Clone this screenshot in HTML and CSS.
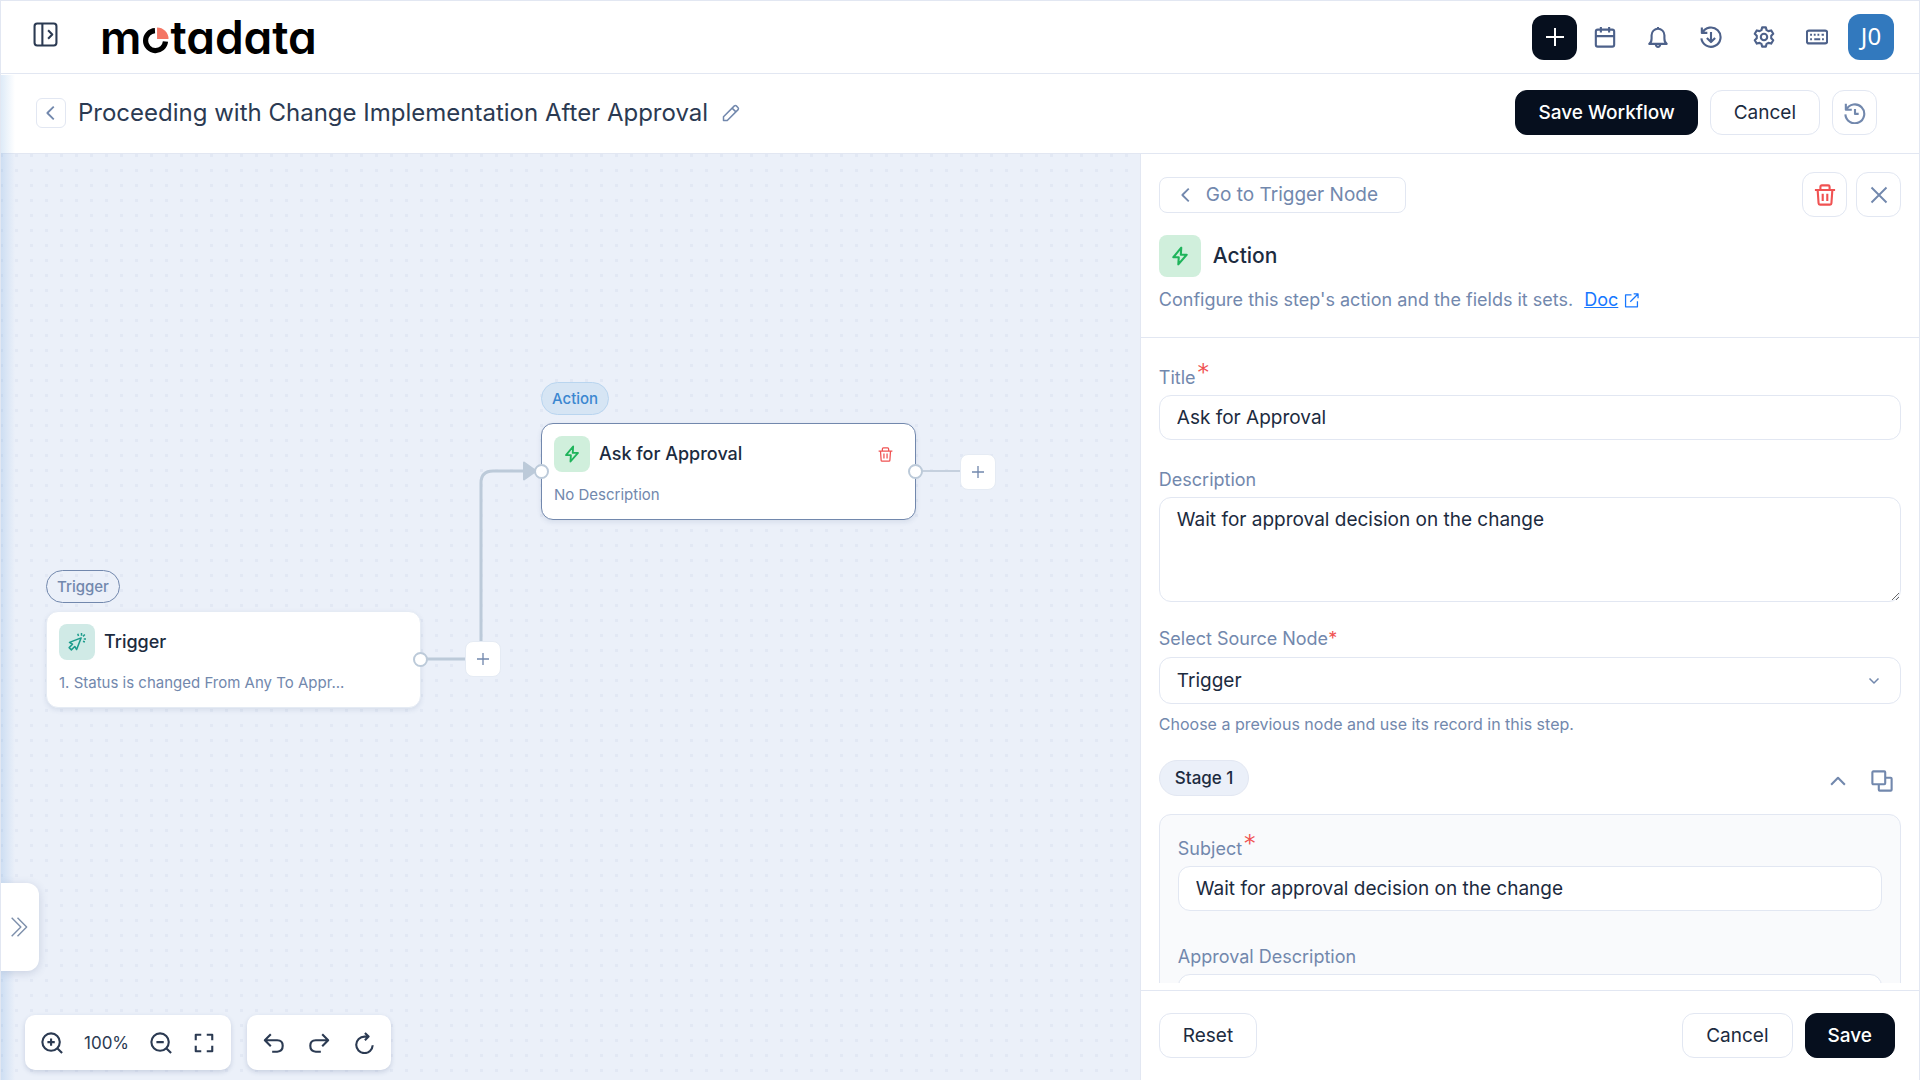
FILE: index.html
```html
<!DOCTYPE html>
<html lang="en">
<head>
    <meta charset="UTF-8">
    <meta name="viewport" content="width=device-width, initial-scale=1.0">
    <title>Workflow - Proceeding with Change Implementation After Approval</title>
    <link rel="stylesheet" href="styles.css">
</head>
<body>
    <!-- Shared icons -->
    <svg class="sprite" aria-hidden="true">
        <symbol id="i-left" viewBox="0 0 24 24"><path d="M15 5l-7 7 7 7"/></symbol>
        <symbol id="i-plus" viewBox="0 0 24 24"><path d="M12 3v18M3 12h18"/></symbol>
        <symbol id="i-bolt" viewBox="0 0 24 24"><path d="M13.500 2L4 13.500h6.500l-.500 8.500L20 10.500h-7z"/></symbol>
        <symbol id="i-trash" viewBox="0 0 24 24"><path d="M1 6.500h22M7 6V3q0-1.500 1.500-1.500h7Q17 1.500 17 3v3M4 7l1 14q0 1.500 1.500 1.500h11q1.500 0 1.500-1.500L20 7M9.500 10.500v8M14.500 10.500v8"/></symbol>
        <symbol id="i-history" viewBox="0 0 24 24"><path d="M2 2v6.500h6.500M2.500 8.500a10.300 10.300 0 1 1-1 5M12 7.500V13h4"/></symbol>
    </svg>

    <div class="app">
        <header class="topbar">
            <button class="icon-btn menu-btn" type="button" aria-label="Expand menu">
                <svg viewBox="0 0 24 24"><rect x="1.500" y="1.500" width="21" height="21" rx="2.500"/><path d="M9 1.500v21M14.500 8l4 4-4 4"/></svg>
            </button>
            <a class="logo" href="#" aria-label="motadata">
                <span>m</span><svg viewBox="0 0 26 26"><path class="logo-ring" d="M12.500 3.500A9.600 9.600 0 1 0 22.600 14"/><path class="logo-wedge" d="M14.500 0.500A11 11 0 0 1 25.500 11.500H14.500z"/></svg><span>tadata</span>
            </a>
            <nav class="top-actions">
                <button class="add-btn" type="button" aria-label="Create"><svg viewBox="0 0 24 24"><use href="#i-plus"/></svg></button>
                <button class="icon-btn" type="button" aria-label="Calendar">
                    <svg viewBox="0 0 24 24"><rect x="2" y="4" width="20" height="18.500" rx="2"/><path d="M2 11h20M7.500 1v6M16.500 1v6"/></svg>
                </button>
                <button class="icon-btn" type="button" aria-label="Notifications">
                    <svg viewBox="0 0 24 24"><path d="M2.500 19.500c2-1.500 2.500-3 2.500-6V10a7 7 0 0 1 14 0v3.500c0 3 .500 4.500 2.500 6zM9.500 20q.500 2.800 2.500 2.800t2.500-2.800M12 1v2"/></svg>
                </button>
                <button class="icon-btn" type="button" aria-label="Updates">
                    <svg viewBox="0 0 24 24"><path d="M2 1.500v6h6M2.500 7.500a10.500 10.500 0 1 1-1 6M12 6.500v11M7.500 13l4.500 4.500 4.500-4.500"/></svg>
                </button>
                <button class="icon-btn" type="button" aria-label="Settings">
                    <svg viewBox="0 0 24 24"><circle cx="12" cy="12" r="3.500"/><path d="M10 1.500h4l.800 3 2 1.100 3-.800 2.300 3.600-2.200 2.200v2.800l2.200 2.200-2.300 3.600-3-.800-2 1.100-.800 3h-4l-.800-3-2-1.100-3 .800-2.300-3.600 2.200-2.200v-2.800L1.900 8.400l2.300-3.600 3 .800 2-1.100z"/></svg>
                </button>
                <button class="icon-btn" type="button" aria-label="Keyboard shortcuts">
                    <svg viewBox="0 0 24 24"><rect x="1" y="5" width="22" height="14" rx="2"/><path d="M4.500 9.500h2M8.500 9.500h2M12.500 9.500h2M17 9.500h2.500M4.500 14.500h2M9 14.500h6.500M17.500 14.500h2"/></svg>
                </button>
                <button class="avatar" type="button">J0</button>
            </nav>
        </header>

        <main class="page">
            <div class="page-head">
                <button class="back-btn" type="button" aria-label="Back"><svg viewBox="0 0 24 24"><use href="#i-left"/></svg></button>
                <h1>Proceeding with Change Implementation After Approval</h1>
                <button class="edit-btn" type="button" aria-label="Rename">
                    <svg viewBox="0 0 24 24"><path d="M2 22v-5L16.500 2.500q1.300-1 2.600 0l2.400 2.400q1 1.300 0 2.600L7 22zM13.500 5.500l5 5"/></svg>
                </button>
                <div class="head-actions">
                    <button class="btn btn-dark" type="button">Save Workflow</button>
                    <button class="btn" type="button">Cancel</button>
                    <button class="square-btn" type="button" aria-label="History"><svg viewBox="0 0 24 24"><use href="#i-history"/></svg></button>
                </div>
            </div>

            <div class="workspace">
                <section class="canvas">
                    <svg class="edges" aria-hidden="true">
                        <path class="edge" d="M420 505H470M480 505V329Q480 317 492 317H526"/>
                        <path class="edge-thin" d="M915 317H960"/>
                        <path class="arrow" d="M523 308.500L535 317l-12 8.500z"/>
                    </svg>

                    <div class="node-group action-node">
                        <span class="tag tag-action">Action</span>
                        <article class="node selected">
                            <div class="node-head">
                                <span class="node-icon green"><svg viewBox="0 0 24 24"><use href="#i-bolt"/></svg></span>
                                <h2>Ask for Approval</h2>
                                <button class="node-delete" type="button" aria-label="Delete node"><svg viewBox="0 0 24 24"><use href="#i-trash"/></svg></button>
                            </div>
                            <p>No Description</p>
                            <i class="port port-in"></i>
                            <i class="port port-out"></i>
                        </article>
                    </div>

                    <div class="node-group trigger-node">
                        <span class="tag">Trigger</span>
                        <article class="node">
                            <div class="node-head">
                                <span class="node-icon teal">
                                    <svg viewBox="0 0 24 24"><path d="M17.500 6.500L2 12.500l4 2.500-4.500 4.500 3 3L9 18l2.500 4zM13 1l1 3M18 0v3.500M22.500 2L20 4.500M21 8h3M20 11l2.500 1"/></svg>
                                </span>
                                <h2>Trigger</h2>
                            </div>
                            <p>1. Status is changed From Any To Appr...</p>
                            <i class="port port-out"></i>
                        </article>
                    </div>

                    <button class="add-node add-trigger" type="button" aria-label="Add node after Trigger"><svg viewBox="0 0 24 24"><use href="#i-plus"/></svg></button>
                    <button class="add-node add-action" type="button" aria-label="Add node after Ask for Approval"><svg viewBox="0 0 24 24"><use href="#i-plus"/></svg></button>

                    <button class="drawer-btn" type="button" aria-label="Open drawer">
                        <svg viewBox="0 0 24 24"><path d="M2 1l11 11L2 23M9 1l11 11L9 23"/></svg>
                    </button>

                    <div class="canvas-tools">
                        <div class="tool-group zoom-tools">
                            <button type="button" aria-label="Zoom in"><svg viewBox="0 0 24 24"><circle cx="11" cy="11" r="9.500"/><path d="M18 18l5 5M11 7v8M7 11h8"/></svg></button>
                            <span>100%</span>
                            <button type="button" aria-label="Zoom out"><svg viewBox="0 0 24 24"><circle cx="11" cy="11" r="9.500"/><path d="M18 18l5 5M7 11h8"/></svg></button>
                            <button type="button" aria-label="Fit to screen"><svg viewBox="0 0 24 24"><path d="M3 9V3h6M15 3h6v6M21 15v6h-6M9 21H3v-6"/></svg></button>
                        </div>
                        <div class="tool-group edit-tools">
                            <button type="button" aria-label="Undo"><svg viewBox="0 0 24 24"><path d="M8.500 2.500L2 9l6.500 6.500M2 9h13.500q6 0 6 6t-6 6.500H10"/></svg></button>
                            <button type="button" aria-label="Redo"><svg viewBox="0 0 24 24"><path d="M15.500 2.500L22 9l-6.500 6.500M22 9H8.500q-6 0-6 6t6 6.500H14"/></svg></button>
                            <button type="button" aria-label="Refresh"><svg viewBox="0 0 24 24"><path d="M13 1l4 4-4 4M17 5h-4.500a9 9 0 1 0 9 9.500"/></svg></button>
                        </div>
                    </div>
                </section>

                <aside class="panel">
                    <div class="panel-head">
                        <div class="panel-nav">
                            <button class="goto-btn" type="button"><svg viewBox="0 0 24 24"><use href="#i-left"/></svg>Go to Trigger Node</button>
                            <button class="square-btn danger" type="button" aria-label="Delete"><svg viewBox="0 0 24 24"><use href="#i-trash"/></svg></button>
                            <button class="square-btn close" type="button" aria-label="Close"><svg viewBox="0 0 24 24"><path d="M3 3l18 18M21 3L3 21"/></svg></button>
                        </div>
                        <div class="panel-title">
                            <span class="panel-icon green"><svg viewBox="0 0 24 24"><use href="#i-bolt"/></svg></span>
                            <h2>Action</h2>
                        </div>
                        <p class="panel-info">
                            Configure this step's action and the fields it sets.
                            <a href="#">Doc</a>
                            <svg viewBox="0 0 24 24"><path d="M12 3H2.500v19h19v-9M15.500 1.500h7v7M22 2L10 14"/></svg>
                        </p>
                    </div>

                    <form class="panel-form" id="action-form">
                        <div class="form-scroll">
                            <div class="field">
                                <label for="title">Title<span class="star">*</span></label>
                                <input id="title" type="text" value="Ask for Approval">
                            </div>
                            <div class="field">
                                <label for="description">Description</label>
                                <textarea id="description">Wait for approval decision on the change</textarea>
                            </div>
                            <div class="field field-source">
                                <label for="source">Select Source Node<span class="req">*</span></label>
                                <div class="select-box">
                                    <select id="source"><option>Trigger</option></select>
                                    <svg viewBox="0 0 24 24"><path d="M3 7l9 9 9-9"/></svg>
                                </div>
                                <p class="hint">Choose a previous node and use its record in this step.</p>
                            </div>

                            <div class="stage-head">
                                <span class="stage-tag">Stage 1</span>
                                <button type="button" aria-label="Collapse stage"><svg viewBox="0 0 24 24"><path d="M4.500 16l7.500-7.500 7.500 7.500"/></svg></button>
                                <button type="button" aria-label="Duplicate stage"><svg viewBox="0 0 24 24"><rect x="1.500" y="1.500" width="14" height="14" rx="1"/><path d="M15.500 8.500h6q1 0 1 1v12q0 1-1 1h-12q-1 0-1-1v-6"/></svg></button>
                            </div>
                            <div class="stage-card">
                                <div class="field">
                                    <label for="subject">Subject<span class="star">*</span></label>
                                    <input id="subject" type="text" value="Wait for approval decision on the change">
                                </div>
                                <div class="field">
                                    <label for="approval">Approval Description</label>
                                    <textarea id="approval"></textarea>
                                </div>
                            </div>
                        </div>
                        <div class="panel-footer">
                            <button class="btn" type="reset">Reset</button>
                            <button class="btn push" type="button">Cancel</button>
                            <button class="btn btn-dark" type="submit">Save</button>
                        </div>
                    </form>
                </aside>
            </div>
        </main>
    </div>
</body>
</html>
```

FILE: styles.css
```css
* {
    box-sizing: border-box;
}

body {
    margin: 0;
    font-family: Inter, "Liberation Sans", sans-serif;
    font-size: 19px;
    color: #1c2b40;
    background: #fff;
}

h1, h2, p {
    margin: 0;
}

button, input, select, textarea {
    font: inherit;
    color: inherit;
    margin: 0;
}

button {
    display: flex;
    align-items: center;
    justify-content: center;
    padding: 0;
    background: none;
    border: 0;
    cursor: pointer;
}

svg {
    flex: none;
    fill: none;
    stroke: currentColor;
    stroke-width: 2;
    stroke-linejoin: round;
}

.sprite {
    position: absolute;
    width: 0;
    height: 0;
}

.app {
    display: flex;
    flex-direction: column;
    height: 100vh;
    border: 1px solid #e2e7f2;
    border-bottom: 0;
}

/* Top bar */
.topbar {
    display: flex;
    align-items: center;
    flex: none;
    height: 73px;
    padding: 0 25px 0 32px;
    border-bottom: 1px solid #e2e7f2;
}

.menu-btn {
    margin-bottom: 6px;
}

.menu-btn svg {
    width: 25px;
    height: 25px;
    color: #2b3a52;
}

.logo {
    display: flex;
    align-items: baseline;
    margin-left: 42px;
    color: #000;
    font-size: 46px;
    line-height: 48px;
    font-weight: 600;
    font-feature-settings: "cv11";
    text-decoration: none;
}

.logo svg {
    width: 27px;
    height: 27px;
    margin: 0 1px;
}

.logo-ring {
    stroke-width: 5;
}

.logo-wedge {
    fill: #f47564;
    stroke: none;
}

.top-actions {
    display: flex;
    align-items: center;
    margin-left: auto;
    gap: 20px;
}

.icon-btn {
    color: #4d618a;
}

.top-actions .icon-btn {
    width: 33px;
    height: 33px;
}

.top-actions .icon-btn svg {
    width: 22px;
    height: 22px;
    stroke-width: 2.3;
}

.add-btn {
    width: 45px;
    height: 45px;
    margin-right: -9px;
    border-radius: 12px;
    background: #060f1e;
    color: #fff;
}

.add-btn svg {
    width: 24px;
    height: 24px;
}

.avatar {
    width: 46px;
    height: 46px;
    margin-left: -5px;
    padding-bottom: 4px;
    border-radius: 12px;
    background: #3279be;
    color: #fff;
    font-family: "Noto Sans", sans-serif;
    font-size: 24px;
}

/* Page */
.page {
    position: relative;
    display: flex;
    flex-direction: column;
    flex: 1;
    min-height: 0;
}

.page::before {
    content: "";
    position: absolute;
    z-index: 1;
    top: 1px;
    bottom: 0;
    left: 0;
    width: 14px;
    background: linear-gradient(90deg, rgba(50, 130, 210, 0.16), rgba(50, 130, 210, 0));
    pointer-events: none;
}

.page-head {
    display: flex;
    align-items: center;
    flex: none;
    height: 80px;
    padding: 0 42px 2px 35px;
    border-bottom: 1px solid #e2e7f2;
}

.back-btn {
    width: 30px;
    height: 30px;
    border: 1px solid #e2e7f2;
    border-radius: 6px;
    color: #7288ad;
}

.back-btn svg {
    width: 22px;
    height: 22px;
}

.page-head h1 {
    margin-left: 12px;
    font-size: 24px;
    line-height: 32px;
    font-weight: 400;
    color: #2b3a52;
    white-space: nowrap;
}

.edit-btn {
    margin-left: 14px;
    color: #7288ad;
}

.edit-btn svg {
    width: 18px;
    height: 18px;
}

.head-actions {
    display: flex;
    margin-left: auto;
    gap: 12px;
}

.btn {
    height: 45px;
    padding: 0 23px;
    border: 1px solid #e2e7f2;
    border-radius: 12px;
    background: #fff;
    white-space: nowrap;
}

.btn-dark {
    padding: 0 22px;
    border-color: #060f1e;
    background: #060f1e;
    color: #fff;
    font-weight: 500;
}

.square-btn {
    width: 45px;
    height: 45px;
    border: 1px solid #e2e7f2;
    border-radius: 12px;
    color: #7288ad;
}

.square-btn svg {
    width: 22px;
    height: 22px;
    stroke-width: 2.3;
}

.square-btn.danger {
    color: #f05252;
}

.square-btn.close svg {
    width: 20px;
    height: 20px;
}

.workspace {
    display: flex;
    flex: 1;
    min-height: 0;
}

/* Canvas */
.canvas {
    position: relative;
    flex: 60 1 0;
    min-width: 0;
    overflow: hidden;
    background: conic-gradient(from 270deg at 3px 3px, #e2e8f4 90deg, #ebf0f9 0) -1px 0 / 15px 15px;
}

.edges {
    position: absolute;
    inset: 0;
    width: 100%;
    height: 100%;
}

.edge {
    stroke: #bccad9;
    stroke-width: 3;
}

.edge-thin {
    stroke: #c5d0de;
    stroke-width: 2;
}

.arrow {
    fill: #bccad9;
    stroke: #bccad9;
}

.node-group {
    position: absolute;
    display: flex;
    flex-direction: column;
    align-items: flex-start;
    gap: 8px;
    width: 375px;
}

.action-node {
    left: 540px;
    top: 228px;
}

.trigger-node {
    left: 45px;
    top: 416px;
}

.tag {
    padding: 0 10px;
    border: 1px solid #7288ad;
    border-radius: 17px;
    color: #7288ad;
    font-size: 15px;
    line-height: 31px;
    font-weight: 500;
}

.tag-action {
    border-color: #b9d5ef;
    background: #d6e5f4;
    color: #3b87d0;
}

.node {
    position: relative;
    width: 100%;
    height: 97px;
    padding: 12px;
    border: 1px solid #e5ebf4;
    border-radius: 12px;
    background: #fff;
    box-shadow: 0 2px 5px rgba(60, 80, 130, 0.12);
}

.node.selected {
    border-color: #7288ad;
}

.node-head {
    display: flex;
    align-items: center;
    gap: 9px;
}

.node-icon, .panel-icon {
    display: flex;
    align-items: center;
    justify-content: center;
    width: 36px;
    height: 36px;
    border-radius: 8px;
}

.green {
    background: #d0efdc;
    color: #1fb45b;
}

.teal {
    background: #d0eae6;
    color: #1c9c8c;
}

.node-icon svg {
    width: 18px;
    height: 18px;
}

.green svg {
    stroke-width: 2.5;
}

.node h2 {
    font-size: 18px;
    line-height: 26px;
    font-weight: 500;
}

.node p {
    margin-top: 13px;
    font-size: 15px;
    line-height: 20px;
    color: #7288ad;
}

.node-delete {
    margin-left: auto;
    margin-right: 10px;
    color: #f05252;
}

.node-delete svg {
    width: 15px;
    height: 15px;
}

.port {
    position: absolute;
    top: 40px;
    width: 15px;
    height: 15px;
    border: 2px solid #bccad9;
    border-radius: 50%;
    background: #fff;
}

.port-in {
    left: -8px;
}

.port-out {
    right: -8px;
}

.add-node {
    position: absolute;
    width: 36px;
    height: 36px;
    border: 1px solid #e5ebf4;
    border-radius: 8px;
    background: #fff;
    color: #7288ad;
}

.add-node svg {
    width: 16px;
    height: 16px;
}

.add-trigger {
    left: 464px;
    top: 487px;
}

.add-action {
    left: 959px;
    top: 300px;
}

.drawer-btn {
    position: absolute;
    z-index: 2;
    left: 0;
    bottom: 109px;
    width: 38px;
    height: 88px;
    border-radius: 0 12px 12px 0;
    background: #fff;
    color: #7d8fab;
    box-shadow: 0 2px 10px rgba(60, 80, 130, 0.2);
}

.drawer-btn svg {
    width: 20px;
    height: 20px;
    stroke-width: 1.7;
}

.canvas-tools {
    position: absolute;
    left: 24px;
    bottom: 10px;
    display: flex;
    gap: 16px;
}

.tool-group {
    display: flex;
    align-items: center;
    height: 55px;
    border-radius: 10px;
    background: #fff;
    color: #2b3a52;
    box-shadow: 0 2px 5px rgba(60, 80, 130, 0.2);
}

.tool-group svg {
    width: 22px;
    height: 22px;
    stroke-width: 2.3;
}

.zoom-tools {
    gap: 21px;
    padding: 0 16px;
    font-size: 17px;
}

.edit-tools {
    gap: 23px;
    padding: 0 16px;
}

/* Side panel */
.panel {
    display: flex;
    flex-direction: column;
    flex: 41 1 0;
    min-width: 0;
    border-left: 1px solid #e2e7f2;
    background: #fff;
}

.panel-head {
    flex: none;
    padding: 18px 18px 25px;
    border-bottom: 1px solid #e2e7f2;
}

.panel-nav {
    display: flex;
    align-items: center;
    gap: 9px;
}

.goto-btn {
    gap: 9px;
    height: 36px;
    margin-right: auto;
    padding: 0 27px 0 15px;
    border: 1px solid #e2e7f2;
    border-radius: 8px;
    color: #7288ad;
}

.goto-btn svg {
    width: 22px;
    height: 22px;
}

.panel-title {
    display: flex;
    align-items: center;
    gap: 12px;
    margin-top: 18px;
}

.panel-icon {
    width: 42px;
    height: 42px;
}

.panel-icon svg {
    width: 20px;
    height: 20px;
}

.panel-title h2 {
    font-size: 21px;
    line-height: 24px;
    font-weight: 500;
}

.panel-info {
    display: flex;
    align-items: center;
    margin-top: 11px;
    font-size: 18px;
    line-height: 24px;
    color: #7288ad;
}

.panel-info a {
    margin-left: 11px;
    color: #1677ff;
    text-decoration: underline;
}

.panel-info svg {
    width: 15px;
    height: 15px;
    margin-left: 6px;
    color: #1677ff;
}

.panel-form {
    display: flex;
    flex-direction: column;
    flex: 1;
    min-height: 0;
}

.form-scroll {
    flex: 1;
    min-height: 0;
    margin-bottom: 7px;
    padding: 27px 18px 0;
    overflow-y: auto;
    scrollbar-width: none;
}

.field {
    margin-bottom: 27px;
}

.field label {
    display: flex;
    margin-bottom: 4px;
    font-size: 18px;
    line-height: 26px;
    color: #7288ad;
}

.star, .req {
    color: #f05252;
}

.star {
    margin-left: 2px;
    font-family: "DejaVu Sans", sans-serif;
    font-size: 23px;
    line-height: 15px;
}

.field input, .field textarea, .field select {
    display: block;
    width: 100%;
    height: 45px;
    padding: 0 17px;
    border: 1px solid #e2e7f2;
    border-radius: 12px;
    background: #fff;
    outline: 0;
}

.field textarea {
    height: 105px;
    padding: 8px 17px;
    line-height: 28px;
    resize: vertical;
}

.field-source {
    margin-top: -3px;
    margin-bottom: 24px;
}

.field-source label {
    margin-bottom: 5px;
}

.field .select-box select {
    height: 47px;
    appearance: none;
}

.select-box {
    position: relative;
}

.select-box svg {
    position: absolute;
    top: 18px;
    right: 21px;
    width: 12px;
    height: 12px;
    stroke-width: 3;
    color: #7288ad;
    pointer-events: none;
}

.hint {
    margin-top: 8px;
    font-size: 16px;
    line-height: 24px;
    color: #7288ad;
}

.stage-head {
    display: flex;
    align-items: center;
    padding-right: 8px;
}

.stage-tag {
    margin-right: auto;
    padding: 0 15px;
    border: 1px solid #e2e7f2;
    border-radius: 18px;
    background: #ebf0f9;
    font-size: 17px;
    line-height: 34px;
    font-weight: 500;
}

.stage-head button {
    margin-top: 6px;
    margin-left: 22px;
    color: #7288ad;
}

.stage-head svg {
    width: 22px;
    height: 22px;
    stroke-width: 2.3;
}

.stage-card {
    margin-top: 18px;
    padding: 21px 18px;
    border: 1px solid #e2e7f2;
    border-radius: 12px;
    background: #f9fafc;
}

.stage-card .field {
    margin-bottom: 33px;
}

.panel-footer {
    display: flex;
    flex: none;
    gap: 12px;
    padding: 22px 24px 22px 18px;
    border-top: 1px solid #e2e7f2;
}

.push {
    margin-left: auto;
}
```
